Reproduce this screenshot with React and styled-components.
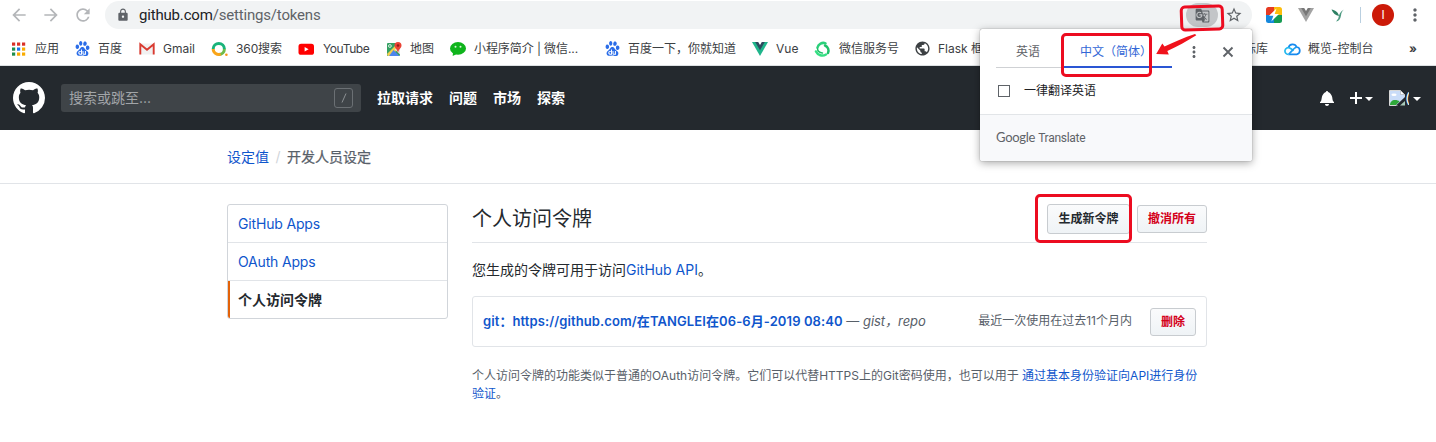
import React from "react";
import styled, { createGlobalStyle } from "styled-components";
import {
  MdArrowBack, MdArrowForward, MdRefresh, MdLock, MdGTranslate,
  MdStarBorder, MdMoreVert, MdPublic,
} from "react-icons/md";
import { SiBaidu } from "react-icons/si";

const Global = createGlobalStyle`
  *, *::before, *::after { box-sizing: border-box; }
  body {
    margin: 0;
    background: #fff;
    color: #24292e;
    font: 14px/20px Inter, "Noto Sans CJK SC", sans-serif;
    overflow: hidden;
  }
  svg { display: block; flex: none; }
`;

const Page = styled.div`
  position: relative;
  width: 1436px;
  height: 442px;
  overflow: hidden;
`;

/* ---------- browser chrome ---------- */

const Toolbar = styled.div`
  height: 32px;
  display: flex;
  align-items: flex-start;
  padding-left: 9px;
  color: #5f6368;
`;

const NavButton = styled.div`
  width: 32px;
  height: 30px;
  padding-top: 5px;
  color: #b4b6b9;
`;

const AddressBar = styled.div`
  display: flex;
  align-items: center;
  width: 1147px;
  height: 28px;
  margin: 1px 0 0;
  padding: 0 9px 0 11px;
  border-radius: 14px;
  background: #f1f3f4;
`;

const Url = styled.div`
  flex: 1;
  margin-left: 9px;
  font: 15px/28px Roboto, sans-serif;
  letter-spacing: -0.18px;
  color: #5f6368;
  b { font-weight: 400; color: #202124; }
`;

const TranslateButton = styled.div`
  width: 32px;
  height: 24px;
  margin-right: 7px;
  border-radius: 12px;
  display: grid;
  place-items: center;
  background: #c3c5c8;
`;

const Extensions = styled.div`
  display: flex;
  align-items: center;
  height: 30px;
  margin-left: 14px;
`;

const ExtSlot = styled.div`
  width: ${(p) => p.$w}px;
`;

const Separator = styled.div`
  width: 1px;
  height: 16px;
  background: #b9cfe0;
  margin-right: 11px;
`;

const Profile = styled.div`
  width: 22px;
  height: 22px;
  border-radius: 50%;
  background: #cc1a08;
  color: #fff;
  font-size: 12px;
  line-height: 22px;
  text-align: center;
  margin-right: 11px;
`;

const BookmarkBar = styled.div`
  height: 34px;
  display: flex;
  align-items: center;
  padding-left: 10px;
  border-bottom: 1px solid #dde1e3;
  font: 12px/18px Inter, "Noto Sans CJK SC", sans-serif;
  color: #3c4043;
  white-space: nowrap;
`;

const Bookmark = styled.div`
  flex: none;
  display: flex;
  align-items: center;
  gap: ${(p) => p.$gap || 8}px;
  width: ${(p) => p.$w}px;
  letter-spacing: ${(p) => p.$ls || 0}px;
`;

/* ---------- translate popup ---------- */

const Popup = styled.div`
  position: absolute;
  z-index: 3;
  left: 980px;
  top: 29px;
  width: 272px;
  height: 132px;
  display: flex;
  flex-direction: column;
  border-radius: 2px;
  background: #fff;
  box-shadow: 0 0 1px rgba(0, 0, 0, 0.6), 0 2px 9px rgba(0, 0, 0, 0.35);
  font-size: 12px;
`;

const PopupTabs = styled.div`
  display: flex;
  padding-left: 16px;
  height: 39px;
  color: #5f6368;
`;

const PopupTab = styled.div`
  width: ${(p) => p.$w}px;
  height: 39px;
  text-align: center;
  padding: 13px 2px 0 0;
  border-bottom: ${(p) => (p.$active ? "2px solid #2a56d4" : "1px solid #cfd1d4")};
  color: ${(p) => (p.$active ? "#3367d6" : "#5f6368")};
  white-space: nowrap;
`;

const PopupIcon = styled.div`
  padding: 14px 0 0 ${(p) => p.$pad}px;
`;

const AlwaysRow = styled.label`
  flex: 1;
  display: flex;
  align-items: center;
  gap: 14px;
  padding-left: 18px;
  color: #202124;
`;

const CheckBox = styled.span`
  width: 12px;
  height: 12px;
  border: 1.5px solid #5f6368;
`;

const PopupFooter = styled.div`
  height: 47px;
  border-top: 1px solid #e2e5e8;
  background: #f8f9fb;
  padding: 0 16px;
  border-radius: 0 0 2px 2px;
  font: 12px/45px Roboto, sans-serif;
  letter-spacing: -0.28px;
  color: #5f6368;
  span { font-family: Lato, sans-serif; font-size: 13px; margin-right: 3px; }
`;

/* ---------- site header ---------- */

const Header = styled.header`
  height: 64px;
  display: flex;
  align-items: center;
  padding: 0 15px 0 13px;
  background: #24292e;
  color: #fff;
`;

const Search = styled.div`
  display: flex;
  align-items: center;
  justify-content: space-between;
  width: 300px;
  height: 28px;
  margin: 0 16px;
  padding: 0 8px;
  border-radius: 3px;
  background: #3f4448;
  color: #a2a5a8;
`;

const SlashKey = styled.span`
  width: 19px;
  height: 20px;
  border: 1px solid #6b7074;
  border-radius: 3px;
  display: grid;
  place-items: center;
`;

const HeaderNav = styled.nav`
  flex: 1;
  display: flex;
  gap: 16px;
  font-weight: 700;
`;

const HeaderTools = styled.div`
  display: flex;
  align-items: center;
`;

const ToolGroup = styled.div`
  display: flex;
  align-items: center;
  margin-left: 16px;
`;

const Caret = styled.span`
  border: 4px solid transparent;
  border-top-color: #fff;
  border-bottom: 0;
  margin-left: ${(p) => p.$gap}px;
  margin-top: 2px;
`;

const AltText = styled.span`
  width: 4px;
  overflow: hidden;
  font-size: 14px;
`;

/* ---------- page body ---------- */

const Link = styled.a`
  color: #0f56cc;
  font-weight: ${(p) => (p.$bold ? 600 : "inherit")};
`;

const Breadcrumb = styled.div`
  height: 54px;
  padding: 17px 227px;
  border-bottom: 1px solid #e1e4e8;
  display: flex;
  color: #586069;
`;

const Slash = styled.span`
  width: 18px;
  text-align: center;
  color: #d1d5da;
`;

const CurrentCrumb = styled.span`
  -webkit-text-stroke: 0.25px;
`;

const Columns = styled.div`
  display: flex;
  align-items: flex-start;
  gap: 24px;
  padding: 20px 229px 0 227px;
`;

const SideMenu = styled.nav`
  width: 221px;
  border: 1px solid #d1d5da;
  border-radius: 3px;
  overflow: hidden;
`;

const SideItem = styled.div`
  height: ${(p) => (p.$current ? 37 : 38)}px;
  padding: 9px 10px;
  border-bottom: ${(p) => (p.$current ? "0" : "1px solid #e1e4e8")};
  color: ${(p) => (p.$current ? "#24292e" : "#0f56cc")};
  font-weight: ${(p) => (p.$current ? 600 : 400)};
  letter-spacing: ${(p) => (p.$current ? 0 : -0.17)}px;
  box-shadow: ${(p) => (p.$current ? "inset 2px 0 #e36209" : "none")};
`;

const Content = styled.main`
  width: 735px;
`;

const Subhead = styled.div`
  display: flex;
  align-items: flex-start;
  height: 39px;
  border-bottom: 1px solid #e1e4e8;
  h2 { flex: 1; margin: 0; font-size: 20px; line-height: 30px; font-weight: 400; }
`;

const Button = styled.button`
  width: ${(p) => p.$w}px;
  height: ${(p) => p.$h || 28}px;
  margin: ${(p) => p.$m || "0"};
  padding: 0;
  border: 1px solid #c8ccd0;
  border-radius: 3px;
  background: linear-gradient(#fafbfc, #eff3f6);
  color: ${(p) => (p.$danger ? "#d4001a" : "#24292e")};
  font: 700 12px/18px Inter, "Noto Sans CJK SC", sans-serif;
`;

const Intro = styled.p`
  margin: 17px 0 16px;
  line-height: 20px;
`;

const TokenRow = styled.div`
  display: flex;
  align-items: center;
  height: 51px;
  padding: 0 10px;
  border: 1px solid #e1e4e8;
  border-radius: 3px;
  white-space: nowrap;
`;

const TokenName = styled.div`
  flex: 1;
  font-size: 13px;
  color: #586069;
  padding-bottom: 2px;
  ${Link} { letter-spacing: 0.1px; }
  em { letter-spacing: -0.05px; }
`;

const LastUsed = styled.div`
  font-size: 12px;
  color: #586069;
  margin-right: 18px;
  padding-bottom: 2px;
`;

const Note = styled.p`
  margin: 20px 0 0;
  font-size: 12px;
  line-height: 18px;
  color: #586069;
`;

/* ---------- red markup drawn over the page ---------- */

const Highlight = styled.div`
  position: absolute;
  z-index: 4;
  left: ${(p) => p.$x}px;
  top: ${(p) => p.$y}px;
  width: ${(p) => p.$w}px;
  height: ${(p) => p.$h}px;
  border: 3px solid #ec0c20;
  border-radius: 5px;
  transform: rotate(${(p) => p.$tilt || 0}deg);
`;

const Arrow = styled.svg`
  position: absolute;
  z-index: 4;
  left: 1154px;
  top: 32px;
`;

/* ---------- icons ---------- */

const AppsIcon = () => (
  <svg width="17" height="16" viewBox="0 0 17 16">
    {["#d93025", "#d93025", "#d93025", "#1e8e4e", "#1a73e8", "#f9ab00", "#1e8e4e", "#f9ab00", "#f9ab00"].map((c, i) => (
      <rect key={i} x={2 + (i % 3) * 5} y={1.5 + Math.floor(i / 3) * 5} width="3.2" height="3.2" fill={c} />
    ))}
  </svg>
);

const GmailIcon = () => (
  <svg width="16" height="16" viewBox="0 0 16 16">
    <path d="M1 2.5h14v11H1z" fill="#f1f1f1" />
    <path d="M1.3 13.6V3.2L8 8.8l6.7-5.6v10.4" fill="none" stroke="#d93a30" strokeWidth="1.9" />
  </svg>
);

const SearchIcon360 = () => (
  <svg width="17" height="16" viewBox="0 0 17 16" fill="none" strokeWidth="3">
    <path d="M2.2 8a5.6 5.6 0 0 1 11.2 0" stroke="#19b37a" />
    <path d="M13.4 8a5.6 5.6 0 0 1-5.6 5.6" stroke="#6fbb4a" />
    <path d="M2.2 8a5.6 5.6 0 0 0 7.5 5.2" stroke="#f9a51a" />
    <circle cx="15.4" cy="13.8" r="1.3" fill="#f9941a" />
  </svg>
);

const YouTubeIcon = () => (
  <svg width="16" height="16" viewBox="0 0 16 16">
    <rect x="0.5" y="2.8" width="15.5" height="11" rx="2.6" fill="#f00" />
    <path d="M6.6 5.9v4.7l4-2.35z" fill="#fff" />
  </svg>
);

const MapsIcon = () => (
  <svg width="16" height="16" viewBox="0 0 16 16">
    <rect x="1" y="2" width="13" height="13" rx="1" fill="#34a062" />
    <path d="M1 13L11 3l3 3-9 9H2z" fill="#f3d04e" />
    <path d="M7.5 9L13.5 15H3z" fill="#4e86ec" />
    <path d="M8.5 8l5.5 5.5V7z" fill="#e4e5e8" />
    <circle cx="3.9" cy="5" r="1.4" fill="none" stroke="#fff" strokeWidth=".8" />
    <path d="M12 1a3.5 3.5 0 0 0-3.5 3.5C8.5 7 11.4 8 12 12c.6-4 3.5-5 3.5-7.5A3.5 3.5 0 0 0 12 1z" fill="#ea4335" />
    <circle cx="12" cy="4.5" r="1.3" fill="#961d16" />
  </svg>
);

const WeChatIcon = () => (
  <svg width="16" height="16" viewBox="0 0 16 16" fill="#0fb41c">
    <ellipse cx="8" cy="7.4" rx="8" ry="6.3" />
    <path d="M3 11.5L2.7 15l4-2z" />
    <circle cx="5.5" cy="5.8" r="1" fill="#d9f5d9" />
    <circle cx="10.5" cy="5.8" r="1" fill="#d9f5d9" />
  </svg>
);

const VueIcon = ({ outer, inner }) => (
  <svg width="16" height="16" viewBox="0 0 16 16">
    <path d="M0 1h16L8 15z" fill={outer} />
    <path d="M3.2 1h9.6L8 9.3z" fill={inner} />
    <path d="M6.2 1L8 4l1.8-3z" fill="#fff" />
  </svg>
);

const MiniProgramIcon = () => (
  <svg width="17" height="16" viewBox="0 0 17 16" fill="none" strokeWidth="2.5" strokeLinecap="round">
    <path d="M3.5 6.500A6 6 0 0 1 11.5 2.3" stroke="#2bd07a" />
    <path d="M11 4.500A5.5 5.5 0 0 1 14 12" stroke="#1fc069" />
    <path d="M12 13.500A7 7 0 0 1 2 10.5" stroke="#35df83" />
    <path d="M3.5 7.5c0 2.5 2 4.5 5 4.4" stroke="#1fc069" strokeWidth="1.5" />
  </svg>
);

const CloudIcon = () => (
  <svg width="17" height="16" viewBox="0 0 17 16" fill="none" strokeWidth="1.7" strokeLinejoin="round">
    <path d="M4.5 6.500A4.3 4.3 0 0 1 12.6 6a3.7 3.7 0 0 1 .2 7.3H4.5" stroke="#1689ef" />
    <path d="M4.5 13.3a3.3 3.3 0 1 1 1.3-6.2c1.5.5 2.7 1.7 3.7 2.7" stroke="#25b9ee" />
    <path d="M12.8 6.200C10.5 6.2 8 10 4.8 13.3" stroke="#1f9df0" />
  </svg>
);

const BoltExtension = () => (
  <svg width="16" height="16" viewBox="0 0 16 16">
    <clipPath id="tile"><rect width="16" height="16" rx="2.5" /></clipPath>
    <g clipPath="url(#tile)">
      <path d="M0 0h8v8H0z" fill="#e63a22" />
      <path d="M8 0h8v8H8z" fill="#fdbd0b" />
      <path d="M0 8h8v8H0z" fill="#1688dc" />
      <path d="M8 8h8v8H8z" fill="#159b52" />
      <path d="M10.5 1.500L3 8.700h4.400L5.3 14.500 13 7H8.700z" fill="#fff" />
    </g>
  </svg>
);

const BirdExtension = () => (
  <svg width="14" height="16" viewBox="0 0 14 16">
    <path d="M.5 2.500C4 3 7 5 8 9 4.500 8.500 2 6 .5 2.500z" fill="#2d8063" />
    <path d="M13 2.500C9.800 4 7.800 7.500 7.300 11.500L5 14.500c2.800-.3 4.600-2.500 5-6 .3-2.500 1-4.500 3-6z" fill="#4c9a80" />
  </svg>
);

const CloseIcon = () => (
  <svg width="18" height="18" viewBox="0 0 18 18">
    <path d="M4.500 4.500l9 9M13.500 4.500l-9 9" stroke="#5f6368" strokeWidth="1.900" />
  </svg>
);

const GitHubMark = () => (
  <svg width="32" height="32" viewBox="0 0 16 16" fill="#fff">
    <path fillRule="evenodd" d="M8 0C3.580 0 0 3.580 0 8c0 3.540 2.290 6.530 5.470 7.590.4.070.55-.17.55-.38 0-.19-.01-.82-.01-1.490-2.010.37-2.530-.49-2.690-.94-.09-.23-.48-.94-.82-1.130-.28-.15-.68-.52-.01-.53.63-.01 1.080.58 1.230.82.72 1.210 1.870.87 2.330.66.07-.52.28-.87.51-1.070-1.780-.2-3.640-.89-3.640-3.950 0-.87.31-1.590.82-2.150-.08-.2-.36-1.020.08-2.120 0 0 .67-.21 2.200.82.64-.18 1.320-.27 2-.27.68 0 1.360.09 2 .27 1.530-1.040 2.200-.82 2.200-.82.44 1.100.16 1.920.08 2.120.51.56.82 1.270.82 2.150 0 3.070-1.870 3.750-3.650 3.950.29.25.54.73.54 1.480 0 1.070-.01 1.930-.01 2.200 0 .21.15.46.55.38A8.013 8.013 0 0016 8c0-4.420-3.580-8-8-8z" />
  </svg>
);

const BellIcon = () => (
  <svg width="14" height="16" viewBox="0 0 14 16" fill="#fff">
    <path d="M14 12v1H0v-1l.73-.58c.77-.77.81-2.550 1.190-4.420C2.690 3.230 6 2 6 2c0-.55.45-1 1-1s1 .45 1 1c0 0 3.390 1.230 4.160 5 .38 1.880.42 3.660 1.190 4.420l.66.58H14zm-7 4c1.110 0 2-.89 2-2H5c0 1.110.89 2 2 2z" />
  </svg>
);

const PlusIcon = () => (
  <svg width="12" height="12" viewBox="0 0 12 12">
    <path d="M6 0v12M0 6h12" stroke="#fff" strokeWidth="2" />
  </svg>
);

const BrokenImage = () => (
  <svg width="16" height="16" viewBox="0 0 16 16">
    <path d="M.5.5h11l4 4v4L8 15.500H.5z" fill="#c9dcf8" stroke="#d8d8d8" />
    <path d="M11.500.5v4h4z" fill="#fff" stroke="#aaa" strokeWidth=".6" />
    <ellipse cx="5" cy="4.800" rx="2.600" ry="1.300" fill="#fff" />
    <path d="M1 15c0-3 2-5 5-5 2 0 3.500.5 4.500 1.500L7 15z" fill="#2fa83a" />
    <path d="M16 7L7 15.500h2.500L16 10z" fill="#24292e" />
    <path d="M16 11l-5 4.500h5z" fill="#a9c9b8" />
  </svg>
);

const baidu = <SiBaidu size={15} color="#2b6de8" />;

export default function App() {
  return (
    <Page>
      <Global />
      <Toolbar>
        <NavButton><MdArrowBack size={20} /></NavButton>
        <NavButton><MdArrowForward size={20} /></NavButton>
        <NavButton><MdRefresh size={20} /></NavButton>
        <AddressBar>
          <MdLock size={14} />
          <Url><b>github.com</b>/settings/tokens</Url>
          <TranslateButton><MdGTranslate size={15} /></TranslateButton>
          <MdStarBorder size={18} />
        </AddressBar>
        <Extensions>
          <ExtSlot $w={32}><BoltExtension /></ExtSlot>
          <ExtSlot $w={33}><VueIcon outer="#a3a3a3" inner="#777" /></ExtSlot>
          <ExtSlot $w={29}><BirdExtension /></ExtSlot>
          <Separator />
          <Profile>I</Profile>
          <MdMoreVert size={20} />
        </Extensions>
      </Toolbar>

      <BookmarkBar>
        <Bookmark $w={65}><AppsIcon />应用</Bookmark>
        <Bookmark $w={64}>{baidu}百度</Bookmark>
        <Bookmark $w={72}><GmailIcon />Gmail</Bookmark>
        <Bookmark $w={87} $ls={-0.1}><SearchIcon360 />360搜索</Bookmark>
        <Bookmark $w={88} $gap={9} $ls={-0.4}><YouTubeIcon />YouTube</Bookmark>
        <Bookmark $w={64}><MapsIcon />地图</Bookmark>
        <Bookmark $w={155} $ls={-0.08}><WeChatIcon />小程序简介 | 微信...</Bookmark>
        <Bookmark $w={147}>{baidu}百度一下，你就知道</Bookmark>
        <Bookmark $w={62}><VueIcon outer="#1fb58b" inner="#2f4a5f" />Vue</Bookmark>
        <Bookmark $w={100}><MiniProgramIcon />微信服务号</Bookmark>
        <Bookmark $w={330} $gap={7}><MdPublic size={17} />Flask 框架</Bookmark>
        <Bookmark $w={40}>标库</Bookmark>
        <Bookmark $w={125} $gap={7}><CloudIcon />概览-控制台</Bookmark>
        <Bookmark $w={20}><b>»</b></Bookmark>
      </BookmarkBar>

      <Popup>
        <PopupTabs>
          <PopupTab $w={66}>英语</PopupTab>
          <PopupTab $w={110} $active>中文（简体）</PopupTab>
          <PopupIcon $pad={13}><MdMoreVert size={18} /></PopupIcon>
          <PopupIcon $pad={16}><CloseIcon /></PopupIcon>
        </PopupTabs>
        <AlwaysRow><CheckBox />一律翻译英语</AlwaysRow>
        <PopupFooter><span>Google</span>Translate</PopupFooter>
      </Popup>

      <Header>
        <GitHubMark />
        <Search>
          搜索或跳至...
          <SlashKey>
            <svg width="6" height="10" viewBox="0 0 6 10"><path d="M1 9.500L5 .5" stroke="#8c9093" /></svg>
          </SlashKey>
        </Search>
        <HeaderNav>
          <span>拉取请求</span><span>问题</span><span>市场</span><span>探索</span>
        </HeaderNav>
        <HeaderTools>
          <BellIcon />
          <ToolGroup><PlusIcon /><Caret $gap={3} /></ToolGroup>
          <ToolGroup><BrokenImage /><AltText>(</AltText><Caret $gap={4} /></ToolGroup>
        </HeaderTools>
      </Header>

      <Breadcrumb>
        <Link>设定值</Link><Slash>/</Slash><CurrentCrumb>开发人员设定</CurrentCrumb>
      </Breadcrumb>

      <Columns>
        <SideMenu>
          <SideItem>GitHub Apps</SideItem>
          <SideItem>OAuth Apps</SideItem>
          <SideItem $current>个人访问令牌</SideItem>
        </SideMenu>
        <Content>
          <Subhead>
            <h2>个人访问令牌</h2>
            <Button $w={83} $h={30} $m="0 7px 0 0">生成新令牌</Button>
            <Button $w={70} $m="1px 0 0" $danger>撤消所有</Button>
          </Subhead>
          <Intro>您生成的令牌可用于访问<Link>GitHub API</Link>。</Intro>
          <TokenRow>
            <TokenName>
              <Link $bold>git：https://github.com/在TANGLEI在06-6月-2019 08:40</Link> — <em>gist，repo</em>
            </TokenName>
            <LastUsed>最近一次使用在过去11个月内</LastUsed>
            <Button $w={46} $danger>删除</Button>
          </TokenRow>
          <Note>
            个人访问令牌的功能类似于普通的OAuth访问令牌。它们可以代替HTTPS上的Git密码使用，也可以用于 <Link>通过基本身份验证向API进行身份验证</Link>。
          </Note>
        </Content>
      </Columns>

      <Highlight $x={1180} $y={5} $w={44} $h={26} $tilt={-2} />
      <Highlight $x={1061} $y={33} $w={91} $h={44} />
      <Highlight $x={1035} $y={194} $w={97} $h={49} />
      <Arrow width="44" height="26" viewBox="0 0 44 26">
        <path d="M42.300 3.300L41 2C30 5.500 20 10 10.500 14.500L8.300 11.500 2.200 22l12.600.5-1.500-3.500C23 15 33 9 42.300 3.300z" fill="#f0121c" />
      </Arrow>
    </Page>
  );
}
